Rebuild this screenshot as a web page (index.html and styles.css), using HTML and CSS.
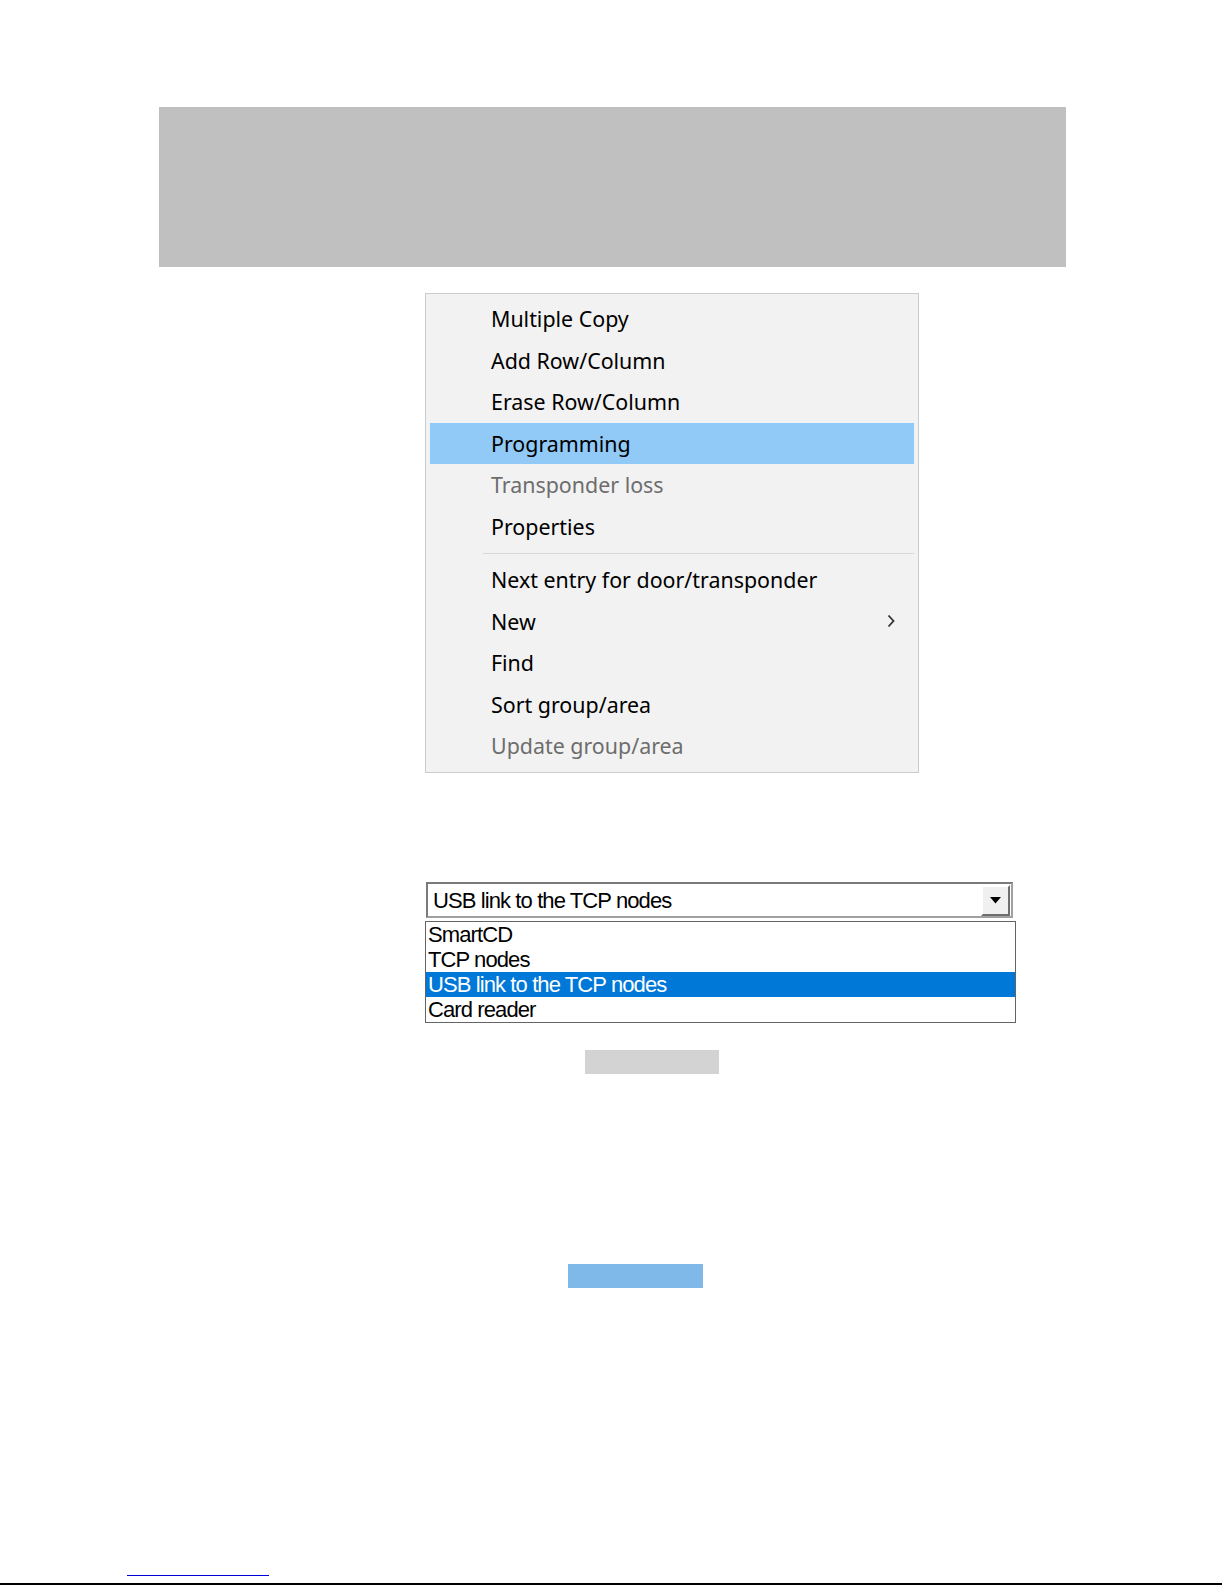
FILE: index.html
```html
<!DOCTYPE html>
<html lang="en">
<head>
    <meta charset="UTF-8">
    <meta name="viewport" content="width=device-width, initial-scale=1.0">
    <title>Menu and combo box</title>
    <link rel="stylesheet" href="styles.css">
</head>
<body>
    <div class="page">
        <div class="banner"></div>

        <!-- context menu -->
        <div class="menu">
            <div class="item">Multiple Copy</div>
            <div class="item">Add Row/Column</div>
            <div class="item">Erase Row/Column</div>
            <div class="item active">Programming</div>
            <div class="item disabled">Transponder loss</div>
            <div class="item">Properties</div>
            <div class="sep"></div>
            <div class="item">Next entry for door/transponder</div>
            <div class="item">New
                <svg class="chev" width="8" height="14" viewBox="0 0 8 14">
                    <path d="M1.5 1.5 L6.5 7 L1.5 12.5" fill="none" stroke="#333" stroke-width="1.8"/>
                </svg>
            </div>
            <div class="item">Find</div>
            <div class="item">Sort group/area</div>
            <div class="item disabled">Update group/area</div>
        </div>

        <!-- combo box with open list -->
        <div class="combo">
            <span class="combo-text">USB link to the TCP nodes</span>
            <div class="combo-btn">
                <svg width="11" height="7" viewBox="0 0 11 7"><path d="M0 0 H11 L5.5 6.5 Z" fill="#000"/></svg>
            </div>
        </div>
        <div class="list">
            <div class="opt">SmartCD</div>
            <div class="opt">TCP nodes</div>
            <div class="opt selected">USB link to the TCP nodes</div>
            <div class="opt">Card reader</div>
        </div>

        <div class="bar bar-gray"></div>
        <div class="bar bar-blue"></div>

        <div class="foot-link"></div>
        <div class="foot-rule"></div>
    </div>
</body>
</html>
```

FILE: styles.css
```css
*{
    padding: 0px;
    margin: 0px;
    box-sizing: border-box;
}
body{
    background-color: #ffffff;
    font-family: "Noto Sans", "Liberation Sans", sans-serif;
}
.page{
    width: 1225px;
    height: 1585px;
    padding-top: 107px;
    overflow: hidden;
}
.banner{
    width: 907px;
    height: 160px;
    margin: 0px auto;
    background-color: #c0c0c0;
}

/* context menu */
.menu{
    width: 494px;
    margin: 26px 0px 0px 425px;
    padding: 4px 4px 5.5px 4px;
    background-color: #f2f2f2;
    border: 1px solid #cccccc;
}
.item{
    display: flex;
    align-items: center;
    justify-content: space-between;
    height: 41.5px;
    padding: 0px 19px 0px 61px;
    font-size: 21.4px;
    color: #000000;
}
.item.active{
    background-color: #91c9f7;
}
.item.disabled{
    color: #6d6d6d;
}
.sep{
    height: 12px;
    margin-left: 53px;
    display: flex;
    align-items: center;
}
.sep::before{
    content: "";
    display: block;
    width: 100%;
    height: 1px;
    background-color: #d7d7d7;
}

/* combo box */
.combo{
    display: flex;
    align-items: center;
    justify-content: space-between;
    width: 587px;
    height: 36px;
    margin: 109px 0px 0px 426px;
    border: 2px solid #a0a0a0;
    border-top-color: #7a7a7a;
    border-left-color: #7a7a7a;
    background-color: #ffffff;
}
.combo-text{
    padding: 2px 0px 0px 5px;
    font-family: "Liberation Sans", sans-serif;
    font-size: 22px;
    letter-spacing: -0.9px;
}
.combo-btn{
    display: flex;
    align-items: center;
    justify-content: center;
    width: 29px;
    height: 31px;
    margin-right: 1px;
    background-color: #f0f0f0;
    border: 2px solid #6e6e6e;
    border-top-color: #ffffff;
    border-left-color: #ffffff;
}
.list{
    width: 591px;
    height: 102px;
    margin: 3px 0px 0px 425px;
    border: 1px solid #646464;
    background-color: #ffffff;
}
.opt{
    height: 25px;
    line-height: 25px;
    padding-left: 2px;
    font-family: "Liberation Sans", sans-serif;
    font-size: 22px;
    letter-spacing: -0.9px;
    color: #000000;
}
.opt.selected{
    background-color: #0078d7;
    color: #ffffff;
}

/* placeholder bars */
.bar{
    height: 24px;
}
.bar-gray{
    width: 134px;
    margin: 27px 0px 0px 585px;
    background-color: #d3d3d3;
}
.bar-blue{
    width: 135px;
    margin: 190px 0px 0px 568px;
    background-color: #7fb9ea;
}
.foot-link{
    width: 142px;
    height: 1px;
    margin: 287px 0px 0px 127px;
    background-color: #0000dd;
}
.foot-rule{
    width: 1222px;
    height: 2px;
    margin-top: 7px;
    background-color: #000000;
}
```
